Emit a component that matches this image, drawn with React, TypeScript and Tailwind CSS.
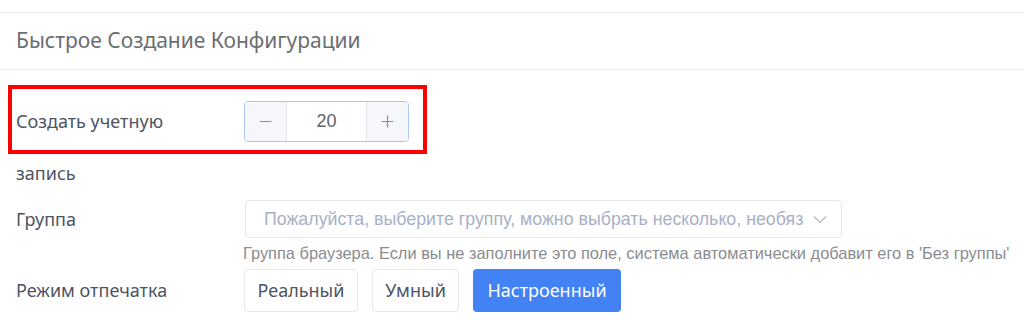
import React from "react";

export default function App() {
  return (
    <div className="relative w-[1024px] h-[320px] bg-white overflow-hidden" style={{ fontFamily: "'Noto Sans', sans-serif" }}>
      <div className="h-[12px]" />
      <div className="border-t border-[#e5e7eb]" />
      <div className="h-[57px] flex items-center px-4 border-b border-[#eceef1]">
        <span className="text-[21px] text-[#6b6e73]">
          Быстрое Создание Конфигурации
        </span>
      </div>

      {/* Row 1 */}
      <div className="flex items-center mt-[31px] h-[41px]">
        <div className="w-[244px] pl-4 text-[18px] text-[#4d5463]">Создать учетную</div>
        <div className="flex h-[41px] w-[165px] rounded-[4px] border border-[#a9c6f5] overflow-hidden">
          <div className="w-[42px] bg-[#f5f7fa] border-r border-[#e4e7ed] flex items-center justify-center">
            <svg width="13" height="13" viewBox="0 0 13 13"><path d="M0.5 6.5h12" stroke="#8c8f96" strokeWidth="1.2" /></svg>
          </div>
          <div className="flex-1 flex items-center justify-center text-[18px] text-[#606266]" style={{ fontFamily: "'Liberation Sans', Arial, sans-serif" }}>20</div>
          <div className="w-[42px] bg-[#f5f7fa] border-l border-[#e4e7ed] flex items-center justify-center">
            <svg width="13" height="13" viewBox="0 0 13 13"><path d="M0.5 6.5h12M6.5 0.5v12" stroke="#8c8f96" strokeWidth="1.2" /></svg>
          </div>
        </div>
      </div>
      <div className="pl-4 mt-[20px] h-[22px] flex items-center text-[18px] text-[#4d5463]">запись</div>

      {/* Group row */}
      <div className="flex items-center mt-[16px] h-[38px]">
        <div className="w-[245px] pl-4 text-[18px] text-[#4d5463]">Группа</div>
        <div className="flex items-center h-[38px] w-[597px] rounded-[4px] border border-[#e4e7ed] pl-[18px] pr-[14px]">
          <span className="flex-1 text-[17.8px] text-[#a8b0c6] whitespace-nowrap overflow-hidden" style={{ fontFamily: "'Liberation Sans', Arial, sans-serif" }}>
            Пожалуйста, выберите группу, можно выбрать несколько, необяз
          </span>
          <svg width="14" height="9" viewBox="0 0 14 9" className="ml-2">
            <path d="M1 1.5l6 6 6-6" fill="none" stroke="#b4b8c4" strokeWidth="1.1" />
          </svg>
        </div>
      </div>
      <div className="pl-[243px] h-[30px] flex items-center text-[16.4px] text-[#8a8c90] whitespace-nowrap" style={{ fontFamily: "'Liberation Sans', Arial, sans-serif" }}>
        Группа браузера. Если вы не заполните это поле, система автоматически добавит его в 'Без группы'
      </div>

      {/* Mode row */}
      <div className="flex items-center h-[43px] mt-[1px]">
        <div className="w-[244px] pl-4 text-[18px] text-[#4d5463]">Режим отпечатка</div>
        <div className="flex gap-[14px]">
          <button className="h-[43px] w-[114px] rounded-[4px] border border-[#e4e7ed] text-[18px] text-[#4d5463] bg-white">Реальный</button>
          <button className="h-[43px] w-[87px] rounded-[4px] border border-[#e4e7ed] text-[18px] text-[#4d5463] bg-white">Умный</button>
          <button className="h-[43px] w-[148px] rounded-[4px] bg-[#4382f4] text-[18px] text-white">Настроенный</button>
        </div>
      </div>

      {/* Red annotation box */}
      <div className="absolute left-[8px] top-[85px] w-[419px] h-[69px] border-[4px] border-[#ff0000] pointer-events-none" />
    </div>
  );
}
